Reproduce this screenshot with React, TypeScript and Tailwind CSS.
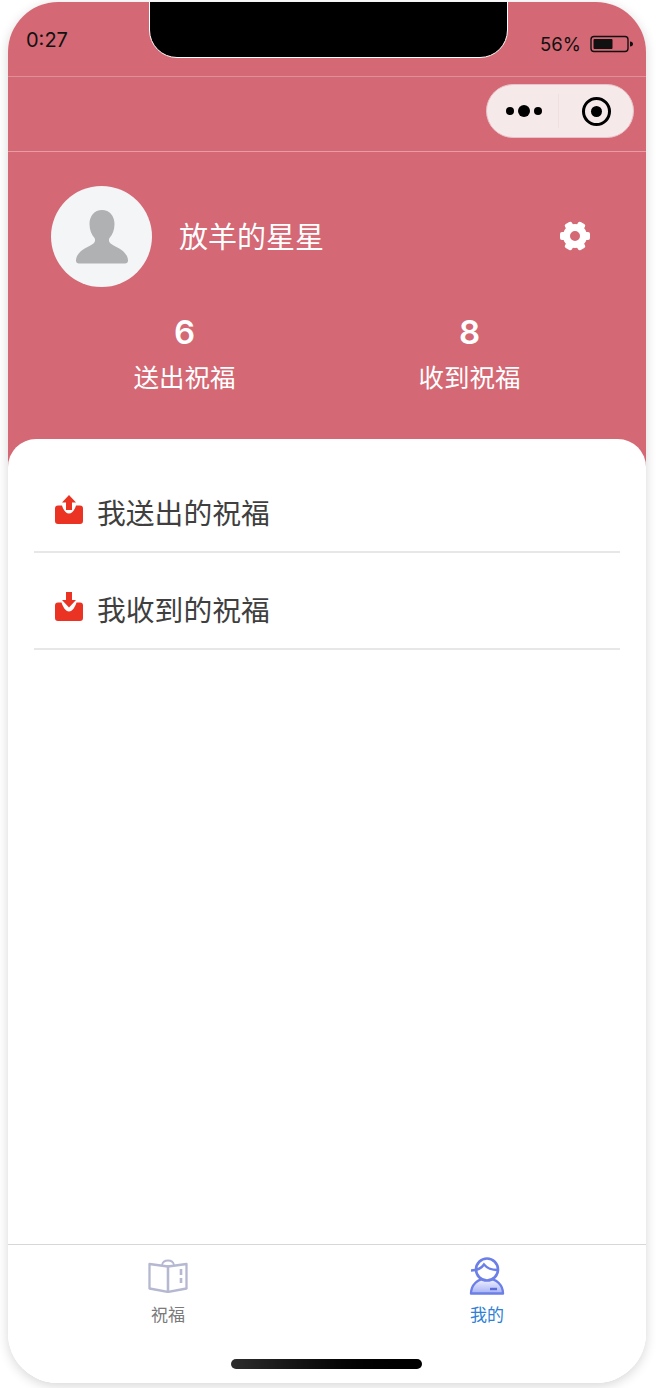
import React from 'react';

const FONT = { fontFamily: '"Noto Sans CJK SC", Inter, "Noto Sans", sans-serif' };

// ── Small drawings ────────────────────────────────────────────────────────────
function Battery() {
  return (
    <svg width="44" height="18" viewBox="0 0 44 18" className="block">
      <rect x="1" y="1.5" width="37" height="15" rx="3" fill="none" stroke="#111" strokeWidth="1.4" />
      <rect x="3.5" y="4" width="19" height="10" rx="1" fill="#111" />
      <path d="M40 6.5c2 0 3 1 3 2.5s-1 2.500-3 2.500z" fill="#111" />
    </svg>
  );
}

function Gear() {
  return (
    <svg width="32" height="32" viewBox="0 0 32 32" className="block">
      <circle cx="16" cy="16" r="8.500" fill="none" stroke="#fff" strokeWidth="7" />
      {[0, 60, 120, 180, 240, 300].map((a) => (
        <rect key={a} x="24" y="12" width="7" height="8" rx="2" fill="#fff" transform={`rotate(${a} 16 16)`} />
      ))}
    </svg>
  );
}

function TrayIcon({ dir }: { dir: 'up' | 'down' }) {
  return (
    <svg width="28" height="29" viewBox="0 0 28 29" className="block">
      <path
        d={
          dir === 'up'
            ? 'M3 10.500h4C8.500 15.500 11 18.500 14 18.500s5.500-3 7-8h4a3 3 0 0 1 3 3V26a3 3 0 0 1-3 3H3a3 3 0 0 1-3-3V13.500a3 3 0 0 1 3-3z'
            : 'M3 10.500h3.500C8 15 10.500 19.500 14 19.500s6-4.500 7.500-9H25a3 3 0 0 1 3 3V26a3 3 0 0 1-3 3H3a3 3 0 0 1-3-3V13.500a3 3 0 0 1 3-3z'
        }
        fill="#ea3323"
      />
      {dir === 'up' ? (
        <path d="M14 0l7 7.500h-4V15h-6V7.500H7z" fill="#ea3323" />
      ) : (
        <path d="M11 0h6v8h4l-7 7.500L7 8h4z" fill="#ea3323" />
      )}
    </svg>
  );
}

function BookIcon() {
  return (
    <svg width="40" height="34" viewBox="0 0 40 34" className="block" fill="none" stroke="#b5b8d0" strokeWidth="2.300" strokeLinejoin="round">
      <path d="M1.500 5L20 7.500V33L1.500 29.500z" />
      <path d="M38.500 5L20 7.500V33L38.500 29.500z" />
      <path d="M14 6c.6-3 3-4.500 6-4.500S25.400 3 26 6" strokeWidth="1.800" />
      <path d="M33 10v6M33 19v5" strokeWidth="2.600" />
    </svg>
  );
}

function PersonIcon() {
  return (
    <svg width="36" height="38" viewBox="0 0 36 38" className="block" fill="none">
      <defs>
        <linearGradient id="body" x1="0" y1="0" x2="0" y2="1">
          <stop offset="0" stopColor="#f4f5ff" />
          <stop offset="1" stopColor="#a5b1f5" />
        </linearGradient>
      </defs>
      <path d="M2 36.500c0-8 6-15 16-15s16 7 16 15z" fill="url(#body)" stroke="#6b7fe6" strokeWidth="2.400" strokeLinejoin="round" />
      <circle cx="18" cy="12.500" r="11" fill="#fff" stroke="#6b7fe6" strokeWidth="2.600" />
      <path d="M2 13.500c6 0 10-1.500 13-6 3 3.500 6 5.500 14 5.500" stroke="#6b7fe6" strokeWidth="2.400" />
      <path d="M21 32h7" stroke="#5b6bd6" strokeWidth="2.400" />
    </svg>
  );
}

// ── Rows ──────────────────────────────────────────────────────────────────────
function ListRow({ dir, label }: { dir: 'up' | 'down'; label: string }) {
  return (
    <div className="mx-[26px] flex h-[97px] items-center border-b-2 border-[#e6e7e9] pl-[21px] pb-[20px] pt-[36px]">
      <div className="mb-[5px]">
        <TrayIcon dir={dir} />
      </div>
      <span className="ml-[14px] text-[28.800px] leading-[39px] text-[#3f3f3f]">{label}</span>
    </div>
  );
}

function Stat({ value, label }: { value: string; label: string }) {
  return (
    <div className="flex w-[101px] flex-col items-center text-white">
      <span className="text-[33px] font-semibold leading-[40px]" style={{ fontFamily: 'Inter, sans-serif' }}>{value}</span>
      <span className="mt-[6px] text-[25.500px] leading-[36px] whitespace-nowrap">{label}</span>
    </div>
  );
}

export default function App() {
  return (
    <div className="h-[1388px] w-[656px] bg-white pl-2 pt-[2px]" style={FONT}>
      <div className="relative flex h-[1381px] w-[638px] flex-col overflow-hidden rounded-[50px] bg-[linear-gradient(#d46874_0_500px,#fff_500px)] shadow-[0_3px_12px_rgba(0,0,0,0.16)]">
        {/* Notch */}
        <div className="absolute left-[141px] top-[-2px] h-[58px] w-[359px] rounded-b-[28px] border border-white bg-black" />

        {/* Status bar */}
        <div className="flex h-[75px] items-start justify-between border-b border-[#e08f98] pl-[18px] pr-[12px] pt-[25px]">
          <span className="text-[20px] leading-[26px] text-[#111]" style={{ fontFamily: 'Inter, sans-serif' }}>0:27</span>
          <div className="mt-[6px] flex items-center gap-[9px]">
            <span className="text-[18.500px] leading-[22px] text-[#111]" style={{ fontFamily: 'Inter, sans-serif' }}>56%</span>
            <Battery />
          </div>
        </div>

        {/* Nav bar with capsule */}
        <div className="flex h-[75px] items-center justify-end border-b border-[#e79da5] pb-[6px] pr-[12px]">
          <div className="flex h-[54px] w-[148px] items-center rounded-full border border-[#e8c3c8] bg-[#f6e9ea]">
            <div className="flex h-[34px] w-[72px] items-center justify-center gap-[4px] border-r border-[#f0dfe0] pl-[2px]">
              <span className="size-[8px] rounded-full bg-black" />
              <span className="size-[12px] rounded-full bg-black" />
              <span className="size-[8px] rounded-full bg-black" />
            </div>
            <div className="flex flex-1 items-center justify-center">
              <div className="flex size-[29px] items-center justify-center rounded-full border-[3px] border-black">
                <span className="size-[11px] rounded-full bg-black" />
              </div>
            </div>
          </div>
        </div>

        {/* Profile */}
        <div className="flex h-[287px] flex-col">
          <div className="flex items-center pl-[43px] pr-[55px] pt-[34px]">
            <div className="flex size-[101px] items-center justify-center rounded-full bg-[#f4f5f7]">
              <svg width="54" height="54" viewBox="0 0 54 54" className="block">
                <path
                  d="M27 0c7.500 0 12.500 6 12.500 14 0 6-2 10.500-5 14-.8 1-.8 4 .8 5.200C40 37 52 40 53 50c.2 2-1 3.500-3 3.500H4c-2 0-3.200-1.500-3-3.500 1-10 13-13 17.700-16.800 1.600-1.200 1.600-4.200.8-5.200-3-3.500-5-8-5-14C14.500 6 19.500 0 27 0z"
                  fill="#b0b1b3"
                />
              </svg>
            </div>
            <span className="mb-[4px] ml-[27px] flex-1 text-[29px] leading-[40px] text-white">放羊的星星</span>
            <div className="mb-[2px]">
              <Gear />
            </div>
          </div>
          <div className="mt-[25px] flex pl-[126px]">
            <Stat value="6" label="送出祝福" />
            <div className="w-[184px]" />
            <Stat value="8" label="收到祝福" />
          </div>
        </div>

        {/* White sheet */}
        <div className="flex flex-1 flex-col rounded-t-[28px] bg-white pt-[17px]">
          <ListRow dir="up" label="我送出的祝福" />
          <ListRow dir="down" label="我收到的祝福" />
          <div className="flex-1" />

          {/* Tab bar */}
          <div className="relative flex h-[139px] border-t border-[#d6d7d9]">
            <div className="flex w-[320px] flex-col items-center pt-[14px]">
              <BookIcon />
              <span className="mt-[9px] text-[17px] leading-[24px] text-[#7a7a7a]">祝福</span>
            </div>
            <div className="flex w-[318px] flex-col items-center pt-[12px]">
              <PersonIcon />
              <span className="mt-[7px] text-[17px] leading-[24px] text-[#2f7fd6]">我的</span>
            </div>
            <div className="absolute bottom-[14px] left-[223px] h-[10px] w-[191px] rounded-full bg-gradient-to-r from-[#2d2d2d] to-black" />
          </div>
        </div>
      </div>
    </div>
  );
}
